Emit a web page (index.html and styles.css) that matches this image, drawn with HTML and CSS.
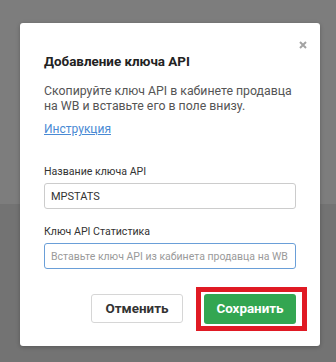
FILE: index.html
```html
<!DOCTYPE html>
<html lang="ru">
<head>
    <meta charset="UTF-8">
    <title>Добавление ключа API</title>
    <link rel="stylesheet" href="styles.css">
</head>
<body>
    <div class="page">
        <div class="page-top"></div>
        <div class="page-bottom"></div>
    </div>
    <div class="overlay">
        <div class="modal">
            <button class="close">
                <svg width="8" height="8" viewBox="0 0 8 8"><path d="M1 1L7 7M7 1L1 7" stroke="#a3a3a3" stroke-width="2"/></svg>
            </button>
            <h2 class="modal-title">Добавление ключа API</h2>
            <p class="modal-text">Скопируйте ключ API в кабинете продавца на WB и вставьте его в поле внизу.</p>
            <a href="#" class="link">Инструкция</a>
            <label class="field">
                <span class="field-label">Название ключа API</span>
                <input type="text" class="input" value="MPSTATS">
            </label>
            <label class="field">
                <span class="field-label">Ключ API Статистика</span>
                <input type="text" class="input focused" placeholder="Вставьте ключ API из кабинета продавца на WB">
            </label>
            <div class="actions">
                <button class="btn btn-cancel">Отменить</button>
                <button class="btn btn-save">Сохранить</button>
            </div>
        </div>
    </div>
</body>
</html>
```

FILE: styles.css
```css
body {
    margin: 0;
    font-family: Roboto, "Noto Sans", sans-serif;
}
.page-top {
    height: 204px;
    background-color: #7d7d7d;
}
.page-bottom {
    height: 158px;
    background-color: #737373;
}
.overlay {
    position: absolute;
    top: 0;
    left: 0;
    width: 336px;
    height: 362px;
}
.modal {
    position: relative;
    margin: 23px 0 0 20px;
    width: 300px;
    height: 323px;
    box-sizing: border-box;
    padding: 30px 24px 0 24px;
    background-color: #fff;
    border-radius: 3px;
    box-shadow: 0 1px 4px rgba(0, 0, 0, 0.25);
}
.close {
    position: absolute;
    top: 18px;
    right: 13px;
    border: none;
    background: none;
    padding: 0;
    width: 8px;
    height: 8px;
    line-height: 0;
}
.modal-title {
    margin: 0;
    font-size: 13.4px;
    font-weight: 700;
    line-height: 18px;
    color: #222;
}
.modal-text {
    margin: 13.3px 0 0 0;
    font-size: 12.3px;
    line-height: 15px;
    color: #555;
}
.link {
    display: block;
    width: max-content;
    margin-top: 7.6px;
    font-size: 12px;
    line-height: 15px;
    color: #4a8ad4;
}
.field {
    display: block;
    margin-top: 28.4px;
}
.field + .field {
    margin-top: 16px;
}
.field-label {
    display: block;
    font-size: 10.6px;
    line-height: 13px;
    color: #333;
    margin-bottom: 5px;
}
.input {
    display: block;
    width: 100%;
    height: 26px;
    box-sizing: border-box;
    border: 1px solid #ccc;
    border-radius: 3px;
    padding: 0 6px;
    font-family: Roboto, sans-serif;
    font-size: 11px;
    color: #333;
    outline: none;
}
.input.focused {
    border-color: #6a9fd8;
}
.input::placeholder {
    color: #9a9a9a;
    font-size: 10.5px;
}
.actions {
    display: flex;
    justify-content: flex-end;
    align-items: center;
    gap: 21px;
    margin-top: 24.7px;
}
.btn {
    width: 92px;
    height: 30px;
    border-radius: 3px;
    font-family: Roboto, sans-serif;
    font-size: 13.4px;
    font-weight: 700;
}
.btn-cancel {
    height: 29px;
    background-color: #fff;
    border: 1px solid #d6d6d6;
    color: #333;
}
.btn-save {
    position: relative;
    background-color: #33a651;
    border: none;
    color: #fff;
}
.btn-save::after {
    content: "";
    position: absolute;
    left: -8px;
    right: -11px;
    top: -7px;
    bottom: -7px;
    border: 5px solid #e01a24;
}
```
